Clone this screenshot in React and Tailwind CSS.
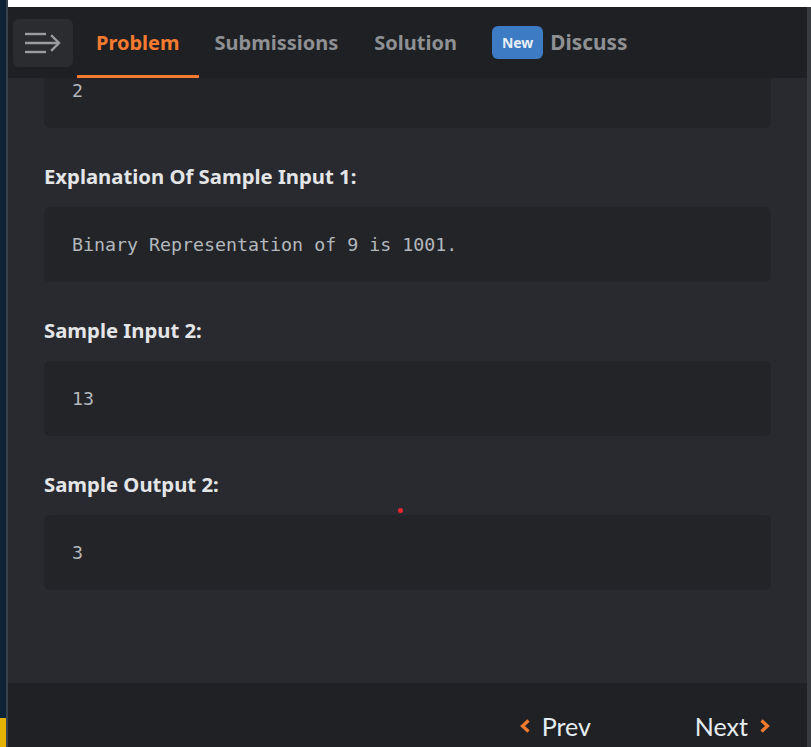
import React from "react";

const heading = "font-['Noto_Sans',sans-serif] font-bold text-[20.3px] leading-[28px] text-[#e4e5e7]";
const mono = "font-['DejaVu_Sans_Mono',monospace] text-[18.3px] text-[#b4b8bd]";

function CodeBlock({ children, className = "" }) {
  return (
    <div className={`h-[75px] rounded-md bg-[#222428] flex items-center px-[28px] ${mono} ${className}`}>
      {children}
    </div>
  );
}

function Section({ title, value }) {
  return (
    <>
      <h3 className={`mt-[34px] ${heading}`}>{title}</h3>
      <CodeBlock className="mt-[17px]">{value}</CodeBlock>
    </>
  );
}

function MenuIcon() {
  return (
    <svg width="36" height="22" viewBox="0 0 36 22" fill="none" stroke="#9b9c9e" strokeWidth="2.4">
      <line x1="0" y1="2" x2="21" y2="2" />
      <line x1="0" y1="11" x2="34" y2="11" />
      <line x1="0" y1="20" x2="21" y2="20" />
      <polyline points="27,4 34,11 27,18" strokeLinecap="square" />
    </svg>
  );
}

function Chevron({ dir }) {
  const pts = dir === "left" ? "8.5,1.5 2.5,7 8.5,12.5" : "1.5,1.5 7.5,7 1.5,12.5";
  return (
    <svg width="10" height="14" viewBox="0 0 10 14" fill="none" stroke="#f47a2f" strokeWidth="3.2">
      <polyline points={pts} />
    </svg>
  );
}

export default function App() {
  const tab = "h-full flex items-center font-['Noto_Sans',sans-serif] font-bold text-[20px] text-[#8e9093]";
  return (
    <div className="w-[811px] h-[747px] flex overflow-hidden bg-[#282a2f]">
      <div className="w-[6px] h-full flex flex-col">
        <div className="flex-1 bg-[#0f2337]" />
        <div className="h-[29px] bg-[#e5b200]" />
      </div>
      <div className="w-[2px] h-full bg-[#3a424b]" />
      <div className="flex-1 flex flex-col">
        <div className="h-[7px] bg-white" />
        <div className="flex-1 flex min-h-0">
          <div className="flex-1 flex flex-col min-w-0">
            <header className="h-[71px] bg-[#1e2023] flex items-center">
              <button className="ml-[5px] w-[60px] h-[48px] rounded-md bg-[#2a2c30] flex items-center justify-center">
                <MenuIcon />
              </button>
              <div className={`${tab} ml-[4px] px-[19px] pt-[3px] border-b-[3px] border-[#f47a2f] text-[#f47a2f]`}>Problem</div>
              <div className={`${tab} pl-[16px] pr-[18px]`}>Submissions</div>
              <div className={`${tab} px-[18px]`}>Solution</div>
              <div className={`${tab} pl-[17px]`}>
                <span className="h-[33px] px-[10px] mr-[7px] rounded-md bg-[#3d7bc4] text-[#e8eef5] text-[14px] flex items-center">New</span>
                <span className="text-[20.8px]">Discuss</span>
              </div>
            </header>
            <main className="relative flex-1 min-h-0 overflow-hidden px-[36px]">
              <CodeBlock className="-mt-[25px]">2</CodeBlock>
              <Section title="Explanation Of Sample Input 1:" value="Binary Representation of 9 is 1001." />
              <Section title="Sample Input 2:" value="13" />
              <Section title="Sample Output 2:" value="3" />
              <span className="absolute left-[390px] top-[430px] w-[5px] h-[5px] rounded-full bg-[#e8262a]" />
            </main>
            <footer className="h-[64px] bg-[#1f2124] flex items-start justify-end pt-[29px] pr-[37px] font-['Lato',sans-serif] text-[25px] leading-[28px] text-[#e6edf2]">
              <div className="flex items-center gap-[12px]">
                <Chevron dir="left" />
                <span>Prev</span>
              </div>
              <div className="flex items-center gap-[12px] ml-[104px]">
                <span>Next</span>
                <Chevron dir="right" />
              </div>
            </footer>
          </div>
          <div className="w-[4px] bg-[#383b3f]" />
        </div>
      </div>
    </div>
  );
}
